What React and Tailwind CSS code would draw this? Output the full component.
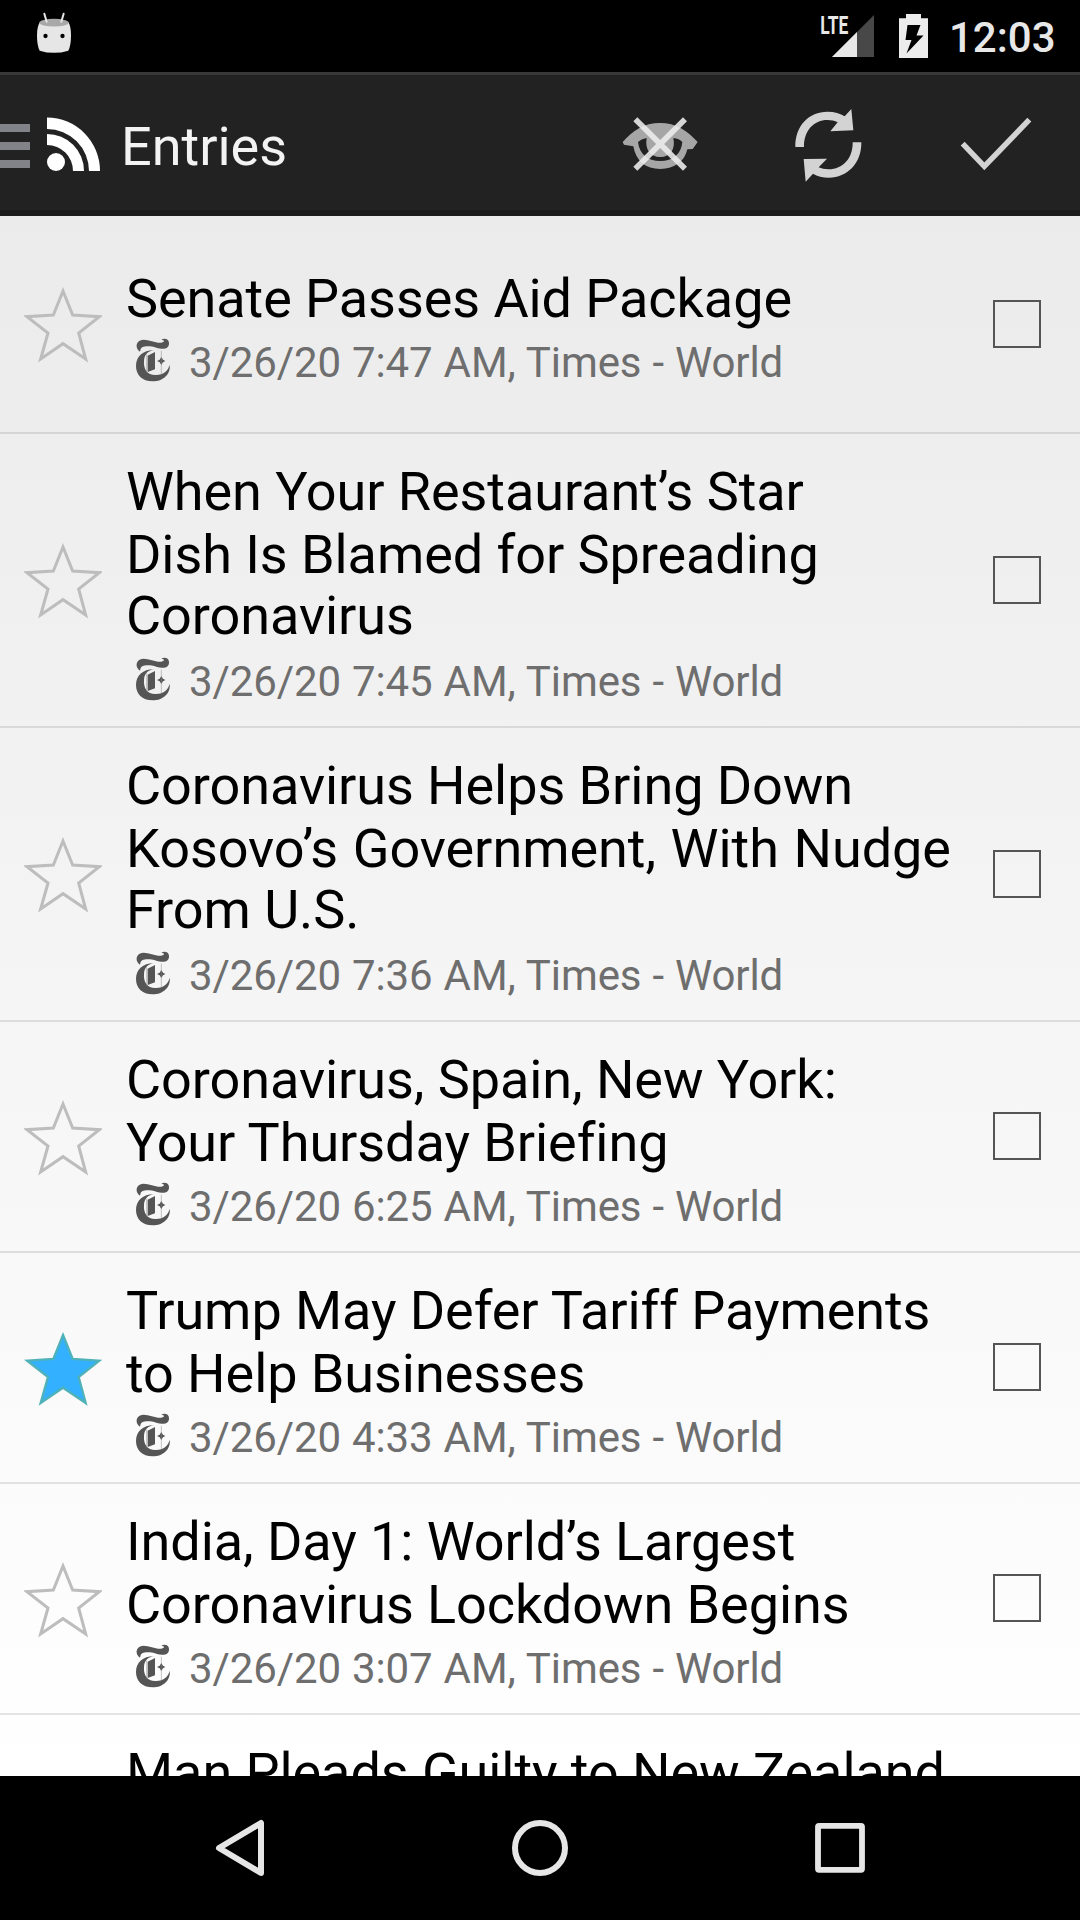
const entries = [
  { lines: ['Senate Passes Aid Package'], time: '7:47' },
  { lines: ['When Your Restaurant’s Star', 'Dish Is Blamed for Spreading', 'Coronavirus'], time: '7:45' },
  { lines: ['Coronavirus Helps Bring Down', 'Kosovo’s Government, With Nudge', 'From U.S.'], time: '7:36' },
  { lines: ['Coronavirus, Spain, New York:', 'Your Thursday Briefing'], time: '6:25' },
  { lines: ['Trump May Defer Tariff Payments', 'to Help Businesses'], time: '4:33', starred: true },
  { lines: ['India, Day 1: World’s Largest', 'Coronavirus Lockdown Begins'], time: '3:07' },
];

function Marshmallow() {
  return (
    <svg className="block h-[42px] w-[36px]" viewBox="108 36 108 126">
      <path d="M120 66 Q162 52 205 66 Q213 78 213 106 Q213 138 205 152 Q162 165 119 152 Q111 138 111 106 Q111 78 120 66Z" fill="#e6e6e6" />
      <ellipse cx="162" cy="68" rx="44" ry="11.5" fill="#a8a8a8" />
      <path d="M133 41 L140 65 M191 41 L184 65" stroke="#e6e6e6" strokeWidth="6" strokeLinecap="round" />
      <circle cx="136.500" cy="108" r="6.500" fill="#000" />
      <circle cx="187.500" cy="108" r="6.500" fill="#000" />
    </svg>
  );
}

function StatusBar() {
  return (
    <div className="flex h-[72px] items-start bg-black">
      <div className="pl-9 pt-3">
        <Marshmallow />
      </div>
      <svg className="ml-auto block h-[72px] w-[60px]" viewBox="820 0 60 72">
        <path d="M874 15V57H832Z" fill="#484848" />
        <path d="M857 32V57H832Z" fill="#e8e8e8" />
        <text x="820.300" y="33.700" fontFamily="Roboto" fontWeight="700" fontSize="26.500" textLength="28" lengthAdjust="spacingAndGlyphs" fill="#e8e8e8">LTE</text>
      </svg>
      <svg className="ml-4 block h-[72px] w-[36px]" viewBox="896 0 36 72">
        <path d="M906 14h15v4.300h7V58h-29V18.300h7z" fill="#ececec" />
        <path d="M907.500 25H920.500L916.500 35.500H923.500L906.500 53.500L911.500 40H905.500Z" fill="#000" />
      </svg>
      <span className="ml-[17px] w-[131px] pt-[13px] text-[42px] leading-[49px] font-medium text-[#e8e8e8]">12:03</span>
    </div>
  );
}

function HiddenEye() {
  return (
    <svg className="block h-24 w-24" viewBox="36 48 288 288">
      <path fillRule="evenodd" fill="#a6a6a6" d="M68 186C98 152 132 129 180 129C228 129 262 152 293 186L278 207L262 208C254 244 224 267 181 267C137 267 108 244 100 199L72 194ZM114 186C118 222 143 243 181 243C219 243 244 222 247 186Q238 176 220 174C227 207 212 231 181 231C150 231 134 207 140 174Q123 177 114 186Z" />
      <path d="M106 118L255 266M255 118L106 266" stroke="#eeeeee" strokeOpacity=".88" strokeWidth="17" />
    </svg>
  );
}

function Refresh() {
  return (
    <svg className="block h-24 w-24" viewBox="540 48 288 288">
      <g fill="#d3d3d3">
        <path d="M586 201C585 137 627 95 682 95C704 95 721 100 734 109L754 87L760 151L691 154L713 127C704 122 694 120 682 120C642 120 611 152 612 201Z" />
        <path d="M784 187C785 251 741 293 687 293C668 293 652 289 639 281L617 305L611 237L681 236L656 262C664 266 674 268 686 268C728 268 759 236 758 187Z" />
      </g>
    </svg>
  );
}

function Check() {
  return (
    <svg className="block h-24 w-24" viewBox="1044 48 288 288">
      <path d="M1088 191L1153 259L1288 119" fill="none" stroke="#d3d3d3" strokeWidth="16.500" />
    </svg>
  );
}

function AppBar() {
  return (
    <header className="flex h-36 items-center border-t-[3px] border-b-[6px] border-t-[#383838] border-b-[#1b1b1b] bg-[#222222] pt-[3px]">
      <div className="flex w-[30px] flex-col gap-[10px] pt-1">
        <span className="h-2 bg-[#828388]" />
        <span className="h-2 bg-[#828388]" />
        <span className="h-2 bg-[#828388]" />
      </div>
      <svg className="ml-[17px] block h-[54px] w-[54px]" viewBox="47 117 54 54">
        <g fill="#fff">
          <circle cx="56" cy="162" r="9" />
          <path d="M47 134A37 37 0 0 1 84 171H73A26 26 0 0 0 47 145Z" />
          <path d="M47 117.500A53 53.500 0 0 1 100 171H89A42 42 0 0 0 47 129Z" />
        </g>
      </svg>
      <h1 className="ml-5 pt-[5px] text-[54px] leading-[63px] text-[#f3f3f3]">Entries</h1>
      <div className="ml-auto flex">
        <button className="flex w-[168px] justify-center" aria-label="Hide read"><HiddenEye /></button>
        <button className="flex w-[168px] justify-center" aria-label="Refresh"><Refresh /></button>
        <button className="flex w-[168px] justify-center" aria-label="Mark all read"><Check /></button>
      </div>
    </header>
  );
}

function Star({ filled }) {
  return (
    <svg className="block h-[78px] w-[78px]" viewBox="72 75 234 234">
      <path
        d="M189 93L218 165L298 170L236 219L257 297L189 251L122 297L144 219L81 170L160 165Z"
        fill={filled ? '#33b0ff' : 'none'}
        stroke={filled ? '#4fb2b8' : '#bdbdbd'}
        strokeWidth={filled ? 7 : 9}
      />
    </svg>
  );
}

/* Blackletter feed logo */
function FeedLogo() {
  return (
    <svg className="block h-[44px] w-[36px]" viewBox="45 24 108 132">
      <g fill="#555">
        <path d="M60 65C47 57 46 39 59 32C76 22 105 41 124 38C134 36 135 30 124 29C134 23 149 28 147 42C145 60 126 58 109 53C93 48 76 47 67 52C60 56 62 62 60 65Z" />
        <path d="M103 61C85 63 73 72 72 93C70 118 82 136 108 135C132 134 145 121 149 104C153 132 129 154 98 154C66 154 48 134 48 108C48 79 70 60 103 61Z" />
        <path d="M83 77L105 66V118L83 126Z" />
        <path d="M124 81L129 89L136 93L129 97L124 105L119 97L111 93L119 89Z" />
      </g>
      <path d="M124 62V132M80 73V128" stroke="#888" strokeWidth="1.500" />
    </svg>
  );
}

function Entry({ lines, time, starred }) {
  return (
    <li className="flex min-h-[218px] items-center border-b-2 border-black/10">
      <div className="flex w-[126px] shrink-0 pl-6">
        <Star filled={starred} />
      </div>
      <div className="grow pt-[26px] pb-5">
        <h2 className="text-[54px] leading-[63px] text-black">
          {lines.map((line, i) => (
            <span
              key={line}
              className={
                'block whitespace-nowrap ' +
                (i === 2 ? '-mt-0.5 pb-0.5 ' : '') +
                (line.includes(', With') ? 'tracking-[-0.04px] [word-spacing:1.2px]' : 'tracking-[-0.07px]')
              }
            >
              {line}
            </span>
          ))}
        </h2>
        <div className="mt-2 flex h-[49px] items-start">
          <div className="ml-[9px] w-[54px]"><FeedLogo /></div>
          <p className="text-[42px] leading-[49px] tracking-[-0.1px] [word-spacing:0.7px] whitespace-nowrap text-[#6e6e6e]">3/26/20 {time} AM, Times - World</p>
        </div>
      </div>
      <span className="-mt-px mr-[39px] h-12 w-12 shrink-0 border-2 border-[#555555]" />
    </li>
  );
}

function NavBar() {
  return (
    <nav className="flex h-36 items-center justify-center gap-[210px] bg-black">
      <svg className="block h-[90px] w-[90px]" viewBox="195 1803 90 90">
        <path d="M219 1848L261 1823V1873Z" fill="none" stroke="#e6e6e6" strokeWidth="6" strokeLinejoin="round" />
      </svg>
      <svg className="block h-[90px] w-[90px]" viewBox="495 1803 90 90">
        <circle cx="540" cy="1848" r="25" fill="none" stroke="#e6e6e6" strokeWidth="6" />
      </svg>
      <svg className="block h-[90px] w-[90px]" viewBox="795 1803 90 90">
        <rect x="818" y="1825.800" width="44" height="44" rx="1" fill="none" stroke="#e6e6e6" strokeWidth="5.800" strokeLinejoin="round" />
      </svg>
    </nav>
  );
}

export default function App() {
  return (
    <div className="flex h-[1920px] w-[1080px] flex-col overflow-hidden bg-black font-[Roboto,sans-serif]">
      <StatusBar />
      <AppBar />
      <ul className="h-[1560px] overflow-hidden bg-linear-to-b from-[#ebebeb] to-white">
        {entries.map((entry) => (
          <Entry key={entry.time} {...entry} />
        ))}
        <li className="pt-[26px] pl-[126px] text-[54px] leading-[63px] tracking-[-0.07px] whitespace-nowrap text-black">
          Man Pleads Guilty to New Zealand
        </li>
      </ul>
      <NavBar />
    </div>
  );
}
